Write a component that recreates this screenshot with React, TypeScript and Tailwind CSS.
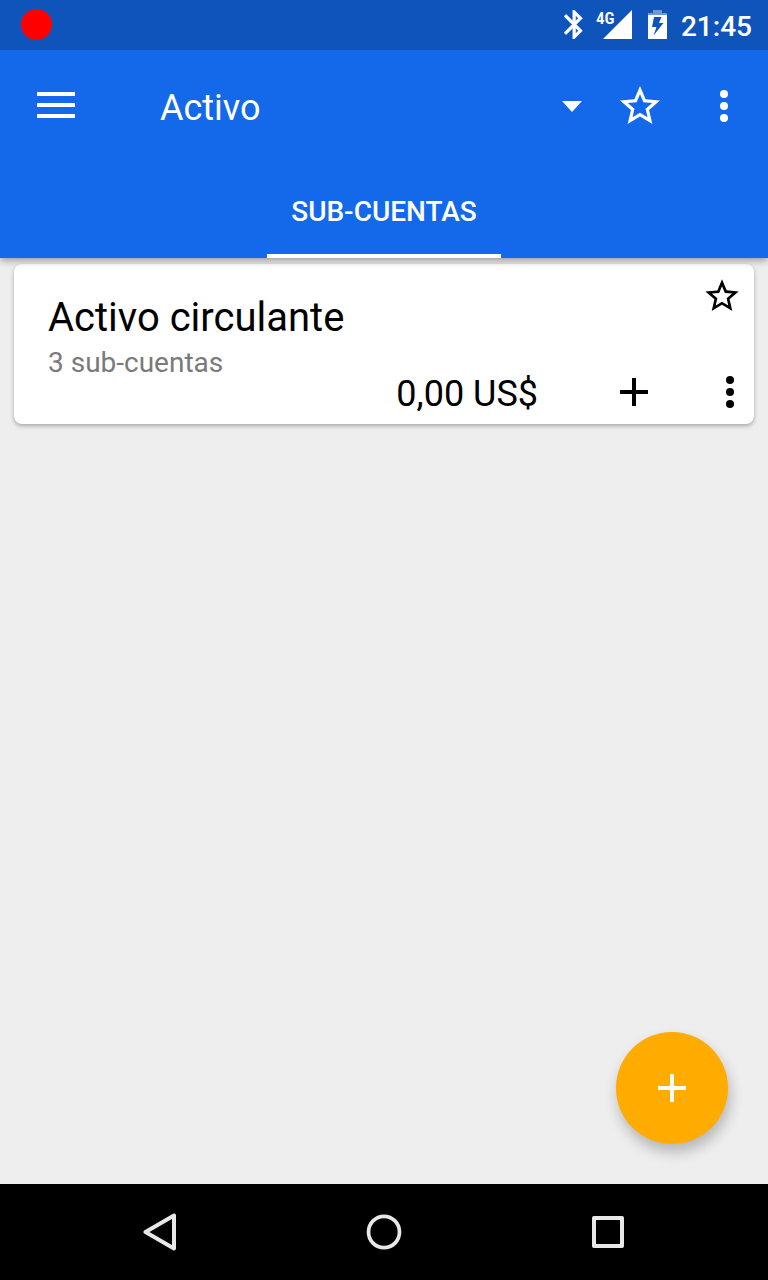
import React from "react";

const STAR =
  "M22 9.24l-7.19-.62L12 2 9.19 8.63 2 9.24l5.46 4.73L5.82 21 12 17.27 18.18 21l-1.63-7.03L22 9.24zM12 15.4l-3.76 2.27 1-4.28-3.32-2.88 4.38-.38L12 6.1l1.71 4.04 4.38.38-3.32 2.88 1 4.28L12 15.4z";

function StarIcon({ className }: { className: string }) {
  return (
    <svg viewBox="0 0 24 24" fill="currentColor" className={className} aria-hidden="true">
      <path d={STAR} />
    </svg>
  );
}

function DotsIcon() {
  return (
    <svg viewBox="0 0 8 32" fill="currentColor" className="h-8 w-2" aria-hidden="true">
      <circle cx="4" cy="4" r="4" />
      <circle cx="4" cy="16" r="4" />
      <circle cx="4" cy="28" r="4" />
    </svg>
  );
}

function PlusIcon() {
  return (
    <svg viewBox="0 0 28 28" fill="currentColor" className="size-7" aria-hidden="true">
      <path d="M12 0h4v12h12v4H16v12h-4V16H0v-4h12z" />
    </svg>
  );
}

function StatusBar() {
  return (
    <div className="flex h-[50px] items-center bg-[#0f54bb] pr-4 pb-px pl-[21px] text-white">
      <span className="size-[31px] rounded-full bg-[#ff0000]" />
      <svg viewBox="5 2 13 20" fill="currentColor" stroke="currentColor" strokeWidth=".3" className="ml-auto h-[29px] w-[19px]" aria-label="Bluetooth">
        <path d="M17.71 7.71L12 2h-1v7.59L6.41 5 5 6.41 10.59 12 5 17.59 6.41 19 11 14.41V22h1l5.71-5.71-4.3-4.29 4.3-4.29zM13 5.83l1.88 1.88L13 9.59V5.83zm1.88 10.46L13 18.17v-3.76l1.88 1.88z" />
      </svg>
      <div className="relative ml-[13px] h-[29px] w-9">
        <svg viewBox="0 0 36 29" fill="currentColor" className="h-full w-full" aria-hidden="true">
          <path d="M36 0v29H7z" />
        </svg>
        <span className="absolute top-0 left-0 text-[17px] leading-4 font-semibold font-[Roboto_Condensed,Roboto,sans-serif]">4G</span>
      </div>
      <svg viewBox="0 0 19 29" fill="currentColor" className="ml-4 h-[29px] w-[19px]" aria-label="Cargando">
        <path opacity=".4" d="M5 0h9v3h5v2H0V3h5z" />
        <path fillRule="evenodd" d="M0 5h19v24H0zM6 7L4 17h4.500L5.500 25.500 15.500 13H11L13.500 7z" />
      </svg>
      <time className="ml-[14px] pt-1 text-[28px] leading-8 font-medium">21:45</time>
    </div>
  );
}

export default function App() {
  return (
    <div className="flex min-h-screen flex-col bg-[#eeeeee] font-[Roboto,sans-serif] text-black">
      <header className="relative z-10 bg-[#1469eb] text-white shadow-[0_2px_8px_rgba(0,0,0,0.4)]">
        <StatusBar />
        <div className="flex h-28 items-stretch pr-2">
          <button type="button" aria-label="Menú" className="flex w-28 items-center justify-center">
            <svg viewBox="0 0 38 26" fill="currentColor" className="mb-[2px] h-[26px] w-[38px]" aria-hidden="true">
              <path d="M0 0h38v4H0zM0 11h38v4H0zM0 22h38v4H0z" />
            </svg>
          </button>
          <div className="relative ml-12 flex flex-1">
            <select aria-label="Cuenta" defaultValue="Activo" className="w-full appearance-none bg-transparent pt-1 text-4xl text-white">
              <option>Activo</option>
            </select>
            <svg viewBox="0 0 20 11" fill="currentColor" className="pointer-events-none absolute inset-y-0 right-[10px] my-auto h-[11px] w-5" aria-hidden="true">
              <path d="M0 0h20L10 11z" />
            </svg>
          </div>
          <button type="button" aria-label="Favorito" className="flex w-24 items-center justify-center">
            <StarIcon className="size-12" />
          </button>
          <button type="button" aria-label="Más opciones" className="flex w-[72px] items-center justify-center">
            <DotsIcon />
          </button>
        </div>
        <nav className="flex justify-center">
          <button type="button" className="h-24 border-b-4 border-white px-6 pt-2 text-[28px] font-medium">
            SUB-CUENTAS
          </button>
        </nav>
      </header>

      <main className="relative flex-1 px-[14px] pt-[6px]">
        <article className="flex h-40 rounded-lg bg-white pl-[34px] shadow-[0_2px_4px_rgba(0,0,0,0.3)]">
          <div className="flex-1 pt-[29px]">
            <h2 className="text-[40px] leading-[50px]">Activo circulante</h2>
            <p className="text-[28px] leading-10 text-[#7a7a7a]">3 sub-cuentas</p>
          </div>
          <p className="mr-10 flex h-[60px] items-center self-end text-4xl">0,00 US$</p>
          <button type="button" aria-label="Agregar" className="flex h-16 w-28 items-center justify-center self-end">
            <PlusIcon />
          </button>
          <div className="flex w-16 flex-col justify-between pt-3">
            <button type="button" aria-label="Favorito" className="self-center">
              <StarIcon className="size-10" />
            </button>
            <button type="button" aria-label="Más opciones" className="flex h-16 w-12 items-center justify-center self-end">
              <DotsIcon />
            </button>
          </div>
        </article>
        <button
          type="button"
          aria-label="Nueva cuenta"
          className="absolute right-10 bottom-10 flex size-28 items-center justify-center rounded-full bg-[#ffab00] text-white shadow-[2px_8px_14px_rgba(0,0,0,0.24)]"
        >
          <PlusIcon />
        </button>
      </main>

      <footer className="flex h-24 bg-black px-12 text-[#e8e8e8]">
        <button type="button" aria-label="Atrás" className="flex flex-1 items-center justify-center">
          <svg viewBox="0 0 34 38" fill="none" stroke="currentColor" strokeWidth="4" strokeLinejoin="round" className="h-[38px] w-[34px]" aria-hidden="true">
            <path d="M31 2.500v33L2.500 19z" />
          </svg>
        </button>
        <button type="button" aria-label="Inicio" className="flex flex-1 items-center justify-center">
          <svg viewBox="0 0 36 36" fill="none" stroke="currentColor" strokeWidth="3.700" className="size-9" aria-hidden="true">
            <ellipse cx="18" cy="18" rx="15.500" ry="15.700" />
          </svg>
        </button>
        <button type="button" aria-label="Recientes" className="flex flex-1 items-center justify-center">
          <svg viewBox="0 0 32 32" fill="none" stroke="currentColor" strokeWidth="4" strokeLinejoin="round" className="size-8" aria-hidden="true">
            <path d="M2 2h28v28H2z" />
          </svg>
        </button>
      </footer>
    </div>
  );
}
